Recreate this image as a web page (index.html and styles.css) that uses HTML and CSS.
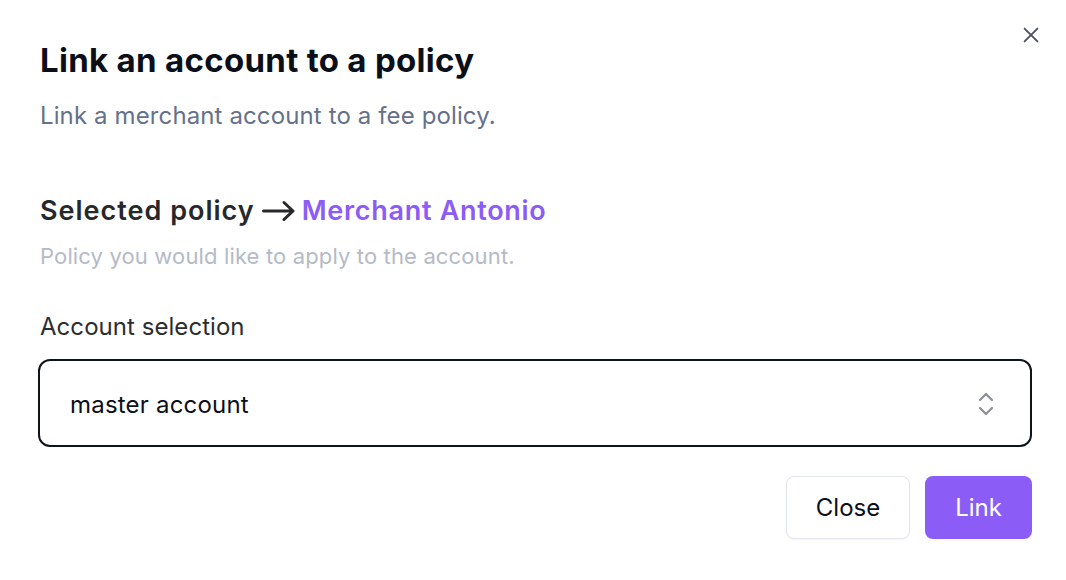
FILE: index.html
```html
<!DOCTYPE html>
<html>
<head>
<meta charset="utf-8">
<link rel="stylesheet" href="styles.css">
</head>
<body>
<div class="dialog">
  <button class="close-x" aria-label="Close">
    <svg width="22" height="22" viewBox="0 0 24 24" fill="none" stroke="#4b5060" stroke-width="2" stroke-linecap="round"><path d="M5 5L19 19M19 5L5 19"/></svg>
  </button>
  <header class="head">
    <h1 class="title">Link an account to a policy</h1>
    <p class="subtitle">Link a merchant account to a fee policy.</p>
  </header>
  <section class="policy">
    <h2 class="policy-title">Selected policy <svg class="arrow" width="33" height="22" viewBox="0 0 33 22" fill="none" stroke="#27282b" stroke-width="3" stroke-linecap="round" stroke-linejoin="round"><path d="M1.5 11H31M22 2.5L31 11L22 19.5"/></svg> <span class="accent">Merchant Antonio</span></h2>
    <p class="policy-desc">Policy you would like to apply to the account.</p>
  </section>
  <section class="field">
    <label class="label">Account selection</label>
    <div class="select">
      <span class="select-value">master account</span>
      <svg class="chev" width="20" height="28" viewBox="0 0 20 28" fill="none" stroke="#8a8d96" stroke-width="2.2" stroke-linecap="round" stroke-linejoin="round"><path d="M4 10L10 4L16 10M4 18L10 24L16 18"/></svg>
    </div>
  </section>
  <footer class="actions">
    <button class="btn btn-outline">Close</button>
    <button class="btn btn-primary">Link</button>
  </footer>
</div>
</body>
</html>
```
FILE: styles.css
```css
* { box-sizing: border-box; }
html, body { margin: 0; padding: 0; background: #fff; }
body { font-family: Inter, "Noto Sans", sans-serif; color: #0b0f19; }
.dialog {
  position: relative;
  width: 1066px;
  min-height: 580px;
  padding: 38px 34px 0 40px;
  display: flex;
  flex-direction: column;
}
.dialog > * { flex: none; }
.close-x {
  position: absolute;
  top: 24px;
  right: 24px;
  background: none;
  border: 0;
  padding: 0;
  width: 22px;
  height: 22px;
}
.head { display: flex; flex-direction: column; }
.title {
  margin: 0;
  font-size: 33px;
  line-height: 44px;
  font-weight: 700;
  letter-spacing: 0.3px;
  color: #0b0f19;
}
.subtitle {
  margin: 18px 0 0;
  font-size: 24px;
  line-height: 32px;
  letter-spacing: 0.12px;
  color: #65718a;
}
.policy { margin-top: 61px; }
.policy-title {
  margin: 0;
  font-size: 27px;
  line-height: 36px;
  font-weight: 600;
  color: #27282b;
  letter-spacing: 1px;
  display: flex;
  align-items: center;
  gap: 7px;
}
.arrow { flex: none; }
.accent { color: #8b5cf6; letter-spacing: 0.7px; }
.policy-desc {
  margin: 12px 0 0;
  font-size: 22px;
  line-height: 30px;
  letter-spacing: 0.14px;
  color: #b5bac6;
}
.field { margin-top: 40px; }
.label {
  display: block;
  font-size: 24px;
  line-height: 32px;
  letter-spacing: 0.05px;
  color: #2c2d30;
}
.select {
  margin-top: 16px;
  margin-left: -2px;
  height: 88px;
  border: 2px solid #0f131d;
  border-radius: 12px;
  display: flex;
  align-items: center;
  justify-content: space-between;
  padding: 2px 34px 0 30px;
}
.select-value { font-size: 24px; letter-spacing: 0.2px; color: #0b0f19; }
.actions {
  margin-top: 29px;
  display: flex;
  justify-content: flex-end;
  gap: 15px;
}
.btn {
  font-family: Inter, "Noto Sans", sans-serif;
  font-size: 24px;
  height: 63px;
  border-radius: 8px;
  padding: 0 28px;
}
.btn-outline {
  background: #fff;
  border: 1px solid #e3e5ee;
  color: #0b0f19;
  box-shadow: 0 1px 2px rgba(0,0,0,0.05);
  width: 124px;
  padding: 0;
}
.btn-primary {
  background: #8b5cf6;
  border: 0;
  color: #fff;
  width: 107px;
  padding: 0;
}
```
